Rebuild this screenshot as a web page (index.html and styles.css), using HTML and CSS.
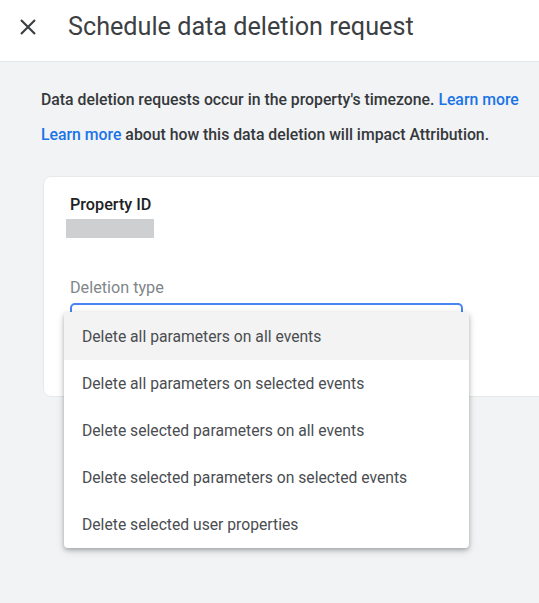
FILE: index.html
```html
<!DOCTYPE html>
<html>
<head>
<meta charset="utf-8">
<link rel="stylesheet" href="styles.css">
</head>
<body>
<header class="topbar">
  <svg class="close-icon" width="18" height="18" viewBox="0 0 18 18"><path d="M2 2 L16 16 M16 2 L2 16" stroke="#3c4043" stroke-width="2.2" fill="none"/></svg>
  <h1 class="title">Schedule data deletion request</h1>
</header>
<main class="content">
  <p class="info">Data deletion requests occur in the property's timezone. <a class="link">Learn more</a></p>
  <p class="info info-second"><a class="link">Learn more</a> about how this data deletion will impact Attribution.</p>
  <section class="card">
    <div class="field-label">Property ID</div>
    <div class="redacted"></div>
    <div class="select-label">Deletion type</div>
    <div class="select-wrap">
      <div class="select-box"></div>
      <ul class="menu">
        <li class="menu-item active">Delete all parameters on all events</li>
        <li class="menu-item">Delete all parameters on selected events</li>
        <li class="menu-item">Delete selected parameters on all events</li>
        <li class="menu-item">Delete selected parameters on selected events</li>
        <li class="menu-item">Delete selected user properties</li>
      </ul>
    </div>
  </section>
</main>
</body>
</html>
```

FILE: styles.css
```css
* { box-sizing: border-box; }
html {
  background: #f1f3f4;
}
body {
  margin: 0;
  padding: 0;
  min-height: 603px;
  background: #f1f3f4;
  font-family: Roboto, "Liberation Sans", Arial, sans-serif;
  color: #3c4043;
  overflow: hidden;
}
.topbar {
  height: 62px;
  background: #fff;
  border-bottom: 1px solid #e3e5e7;
  display: flex;
  align-items: center;
  padding-left: 19px;
  padding-bottom: 8px;
}
.close-icon { flex: none; display: block; }
.title {
  margin: 0 0 0 31px;
  font-size: 25.2px;
  line-height: 30px;
  font-weight: 400;
  color: #3c4043;
}
.content {
  padding: 28px 0 0 41px;
}
.info {
  margin: 0;
  font-size: 15.8px;
  line-height: 20px;
  font-weight: 500;
  color: #35383b;
}
.info-second { margin-top: 15px; }
.link { color: #1a73e8; text-decoration: none; }
.card {
  margin: 31px 0 0 2px;
  width: 520px;
  height: 221px;
  background: #fff;
  border: 1px solid #e6e8ea;
  border-radius: 8px;
  padding: 18px 0 0 26px;
}
.field-label {
  font-size: 16.2px;
  line-height: 20px;
  font-weight: 500;
  color: #202124;
}
.redacted {
  margin: 4px 0 0 -4px;
  width: 88px;
  height: 19px;
  background: #cdcfd0;
}
.select-label {
  margin-top: 40px;
  font-size: 16.2px;
  line-height: 20px;
  color: #80868b;
}
.select-wrap {
  position: relative;
  margin-top: 5px;
  width: 393px;
}
.select-box {
  height: 56px;
  border: 2px solid #4a84f0;
  border-radius: 5px;
}
.menu {
  position: absolute;
  top: 9px;
  left: -6px;
  width: 405px;
  margin: 0;
  padding: 0;
  list-style: none;
  background: #fff;
  border-radius: 4px;
  box-shadow: 0 2px 4px rgba(0,0,0,0.25), 0 3px 10px rgba(0,0,0,0.12);
  overflow: hidden;
}
.menu-item {
  height: 47px;
  display: flex;
  align-items: center;
  padding-left: 18px;
  font-size: 15.7px;
  color: #4a4d51;
}
.menu-item.active {
  background: #f3f3f3;
  height: 48px;
}
```
